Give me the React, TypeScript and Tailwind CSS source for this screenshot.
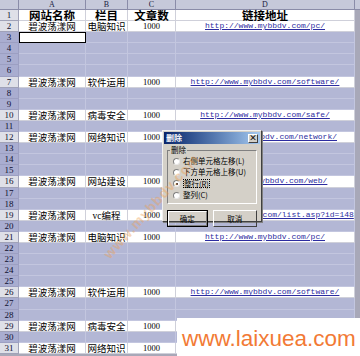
import React from "react";

type Row = { name: string; cat: string; count: string; link: string };

const data: Record<number, Row> = {
  2: { name: "碧波荡漾网", cat: "电脑知识", count: "1000", link: "http://www.mybbdv.com/pc/" },
  7: { name: "碧波荡漾网", cat: "软件运用", count: "1000", link: "http://www.mybbdv.com/software/" },
  10: { name: "碧波荡漾网", cat: "病毒安全", count: "1000", link: "http://www.mybbdv.com/safe/" },
  12: { name: "碧波荡漾网", cat: "网络知识", count: "1000", link: "http://www.mybbdv.com/network/" },
  16: { name: "碧波荡漾网", cat: "网站建设", count: "1000", link: "http://www.mybbdv.com/web/" },
  19: { name: "碧波荡漾网", cat: "vc编程", count: "1000", link: "http://www.mybbdv.com/list.asp?id=148" },
  21: { name: "碧波荡漾网", cat: "电脑知识", count: "1000", link: "http://www.mybbdv.com/pc/" },
  26: { name: "碧波荡漾网", cat: "软件运用", count: "1000", link: "http://www.mybbdv.com/software/" },
  29: { name: "碧波荡漾网", cat: "病毒安全", count: "1000", link: "http://www.mybbdv.com/safe/" },
  31: { name: "碧波荡漾网", cat: "网络知识", count: "1000", link: "http://www.mybbdv.com/network/" },
};

const cjk = "font-['SimSun','Noto_Sans_CJK_SC',sans-serif]";
const serif = "font-['Liberation_Serif',serif]";

function Radio({ checked }: { checked?: boolean }) {
  return (
    <span className="relative inline-block w-[7px] h-[7px] rounded-full bg-white border border-[#808080] border-r-[#e8e8e8] border-b-[#e8e8e8] shrink-0">
      {checked && <span className="absolute left-[1.5px] top-[1.5px] w-[2px] h-[2px] rounded-full bg-black" />}
    </span>
  );
}

function Dialog() {
  return (
    <div className={`absolute left-[162px] top-[130px] w-[100px] h-[92px] bg-[#d4d0c8] border border-[#f0f0f0] border-r-[#404040] border-b-[#404040] shadow-[1px_1px_0_#808080] ${cjk}`}>
      <div className="mx-[1px] mt-[1px] h-[12px] flex items-center justify-between px-[2px] bg-gradient-to-r from-[#0a246a] to-[#a6caf0]">
        <span className="text-[8px] leading-none font-bold text-white">删除</span>
        <span className="w-[10px] h-[9px] bg-[#d4d0c8] border border-white border-r-[#404040] border-b-[#404040] flex items-center justify-center text-[8px] leading-none font-bold text-black">×</span>
      </div>
      <div className="relative mx-[4px] mt-[6px] h-[54px] border border-[#808080] border-r-white border-b-white">
        <span className="absolute -top-[5px] left-[2px] bg-[#d4d0c8] px-[1px] text-[7.5px] leading-none">删除</span>
        <div className="flex flex-col gap-[3px] pl-[5px] pt-[6px] text-[7.5px] leading-[8px]">
          <div className="flex items-center gap-[3px]"><Radio /><span>右侧单元格左移(L)</span></div>
          <div className="flex items-center gap-[3px]"><Radio /><span>下方单元格上移(U)</span></div>
          <div className="flex items-center gap-[3px]"><Radio checked /><span className="border border-dotted border-black leading-[7px]">整行(R)</span></div>
          <div className="flex items-center gap-[3px]"><Radio /><span>整列(C)</span></div>
        </div>
      </div>
      <div className="flex gap-[5px] px-[4px] mt-[6px] text-[7.5px]">
        <div className="w-[41px] h-[17px] border border-black flex">
          <div className="flex-1 flex items-center justify-center border border-white border-r-[#808080] border-b-[#808080]">确定</div>
        </div>
        <div className="w-[45px] h-[17px] flex items-center justify-center border border-white border-r-[#404040] border-b-[#404040]">取消</div>
      </div>
    </div>
  );
}

export default function App() {
  const rowNums = Array.from({ length: 31 }, (_, i) => i + 1);

  return (
    <div className="relative w-[360px] h-[356px] overflow-hidden bg-[#a8a8b8]">
      {/* column header */}
      <div className={`flex h-[10px] bg-[#c6c9da] text-[8px] leading-[9px] text-[#202040] ${serif}`}>
        <div className="w-[19px] border-r border-b border-[#8a8ca8]" />
        <div className="w-[67px] text-center border-r border-b border-[#8a8ca8]">A</div>
        <div className="w-[42px] text-center border-r border-b border-[#8a8ca8]">B</div>
        <div className="w-[48px] text-center border-r border-b border-[#8a8ca8]">C</div>
        <div className="w-[179px] text-center border-r border-b border-[#8a8ca8]">D</div>
        <div className="flex-1 border-b border-[#8a8ca8]" />
      </div>

      {rowNums.map((n) => {
        const row = data[n];
        const isHead = n === 1;
        const white = isHead || !!row;
        const cell = white ? "bg-white border-r border-b border-[#cfd0da]" : "bg-[#b3b7d5] border-r border-b border-[#c3c6df]";
        return (
          <div key={n} className="flex h-[11.1px]">
            <div className={`w-[19px] text-center text-[9px] leading-[10px] text-[#101030] ${serif} border-r border-b ${white ? "bg-[#dfe0e8] border-[#a0a2b8]" : "bg-[#a9add0] border-[#9c9fc2]"}`}>
              {n}
            </div>
            {isHead ? (
              <>
                <div className={`w-[67px] ${cell} text-center text-[11.5px] leading-[10px] font-bold ${cjk}`}>网站名称</div>
                <div className={`w-[42px] ${cell} text-center text-[11.5px] leading-[10px] font-bold ${cjk}`}>栏目</div>
                <div className={`w-[48px] ${cell} text-center text-[11.5px] leading-[10px] font-bold ${cjk}`}>文章数</div>
                <div className={`w-[179px] ${cell} text-center text-[11.5px] leading-[10px] font-bold ${cjk}`}>链接地址</div>
              </>
            ) : row ? (
              <>
                <div className={`w-[67px] ${cell} text-center text-[9.5px] leading-[10px] ${cjk}`}>{row.name}</div>
                <div className={`w-[42px] ${cell} text-center text-[9.5px] leading-[10px] whitespace-nowrap ${cjk}`}>
                  {row.cat === "vc编程" ? (
                    <span><span className={serif}>vc</span>编程</span>
                  ) : (
                    row.cat
                  )}
                </div>
                <div className={`w-[48px] ${cell} text-center text-[8.5px] leading-[10px] ${serif}`}>{row.count}</div>
                <div className={`w-[179px] ${cell} flex justify-center overflow-hidden`}>
                  <span className="whitespace-nowrap text-[8px] leading-[10px] font-['Liberation_Mono',monospace] text-[#2c2ca0] underline">
                    {row.link}
                  </span>
                </div>
              </>
            ) : (
              <>
                <div className={`w-[67px] ${n === 3 ? "bg-white border border-black" : cell}`} />
                <div className={`w-[42px] ${cell}`} />
                <div className={`w-[48px] ${cell}`} />
                <div className={`w-[179px] ${cell}`} />
              </>
            )}
            <div className="flex-1 bg-[#a8a8b8]" />
          </div>
        );
      })}

      <Dialog />

      {/* diagonal watermark */}
      <div className="absolute left-[84px] top-[196px] -rotate-[48deg] origin-center text-[14px] font-bold tracking-[1px] text-[#f0a050] opacity-40 font-['Liberation_Sans',sans-serif] whitespace-nowrap pointer-events-none">
        www.mybbdv.com
      </div>

      {/* bottom watermark */}
      <div className="absolute left-[177px] top-[318px] w-[183px] h-[38px] bg-white">
        <div className="ml-[5px] mt-[9px] text-[22.5px] leading-[24px] text-[#f27a35] font-['Liberation_Sans',sans-serif] whitespace-nowrap">
          www.laixuea.com
        </div>
      </div>
    </div>
  );
}
